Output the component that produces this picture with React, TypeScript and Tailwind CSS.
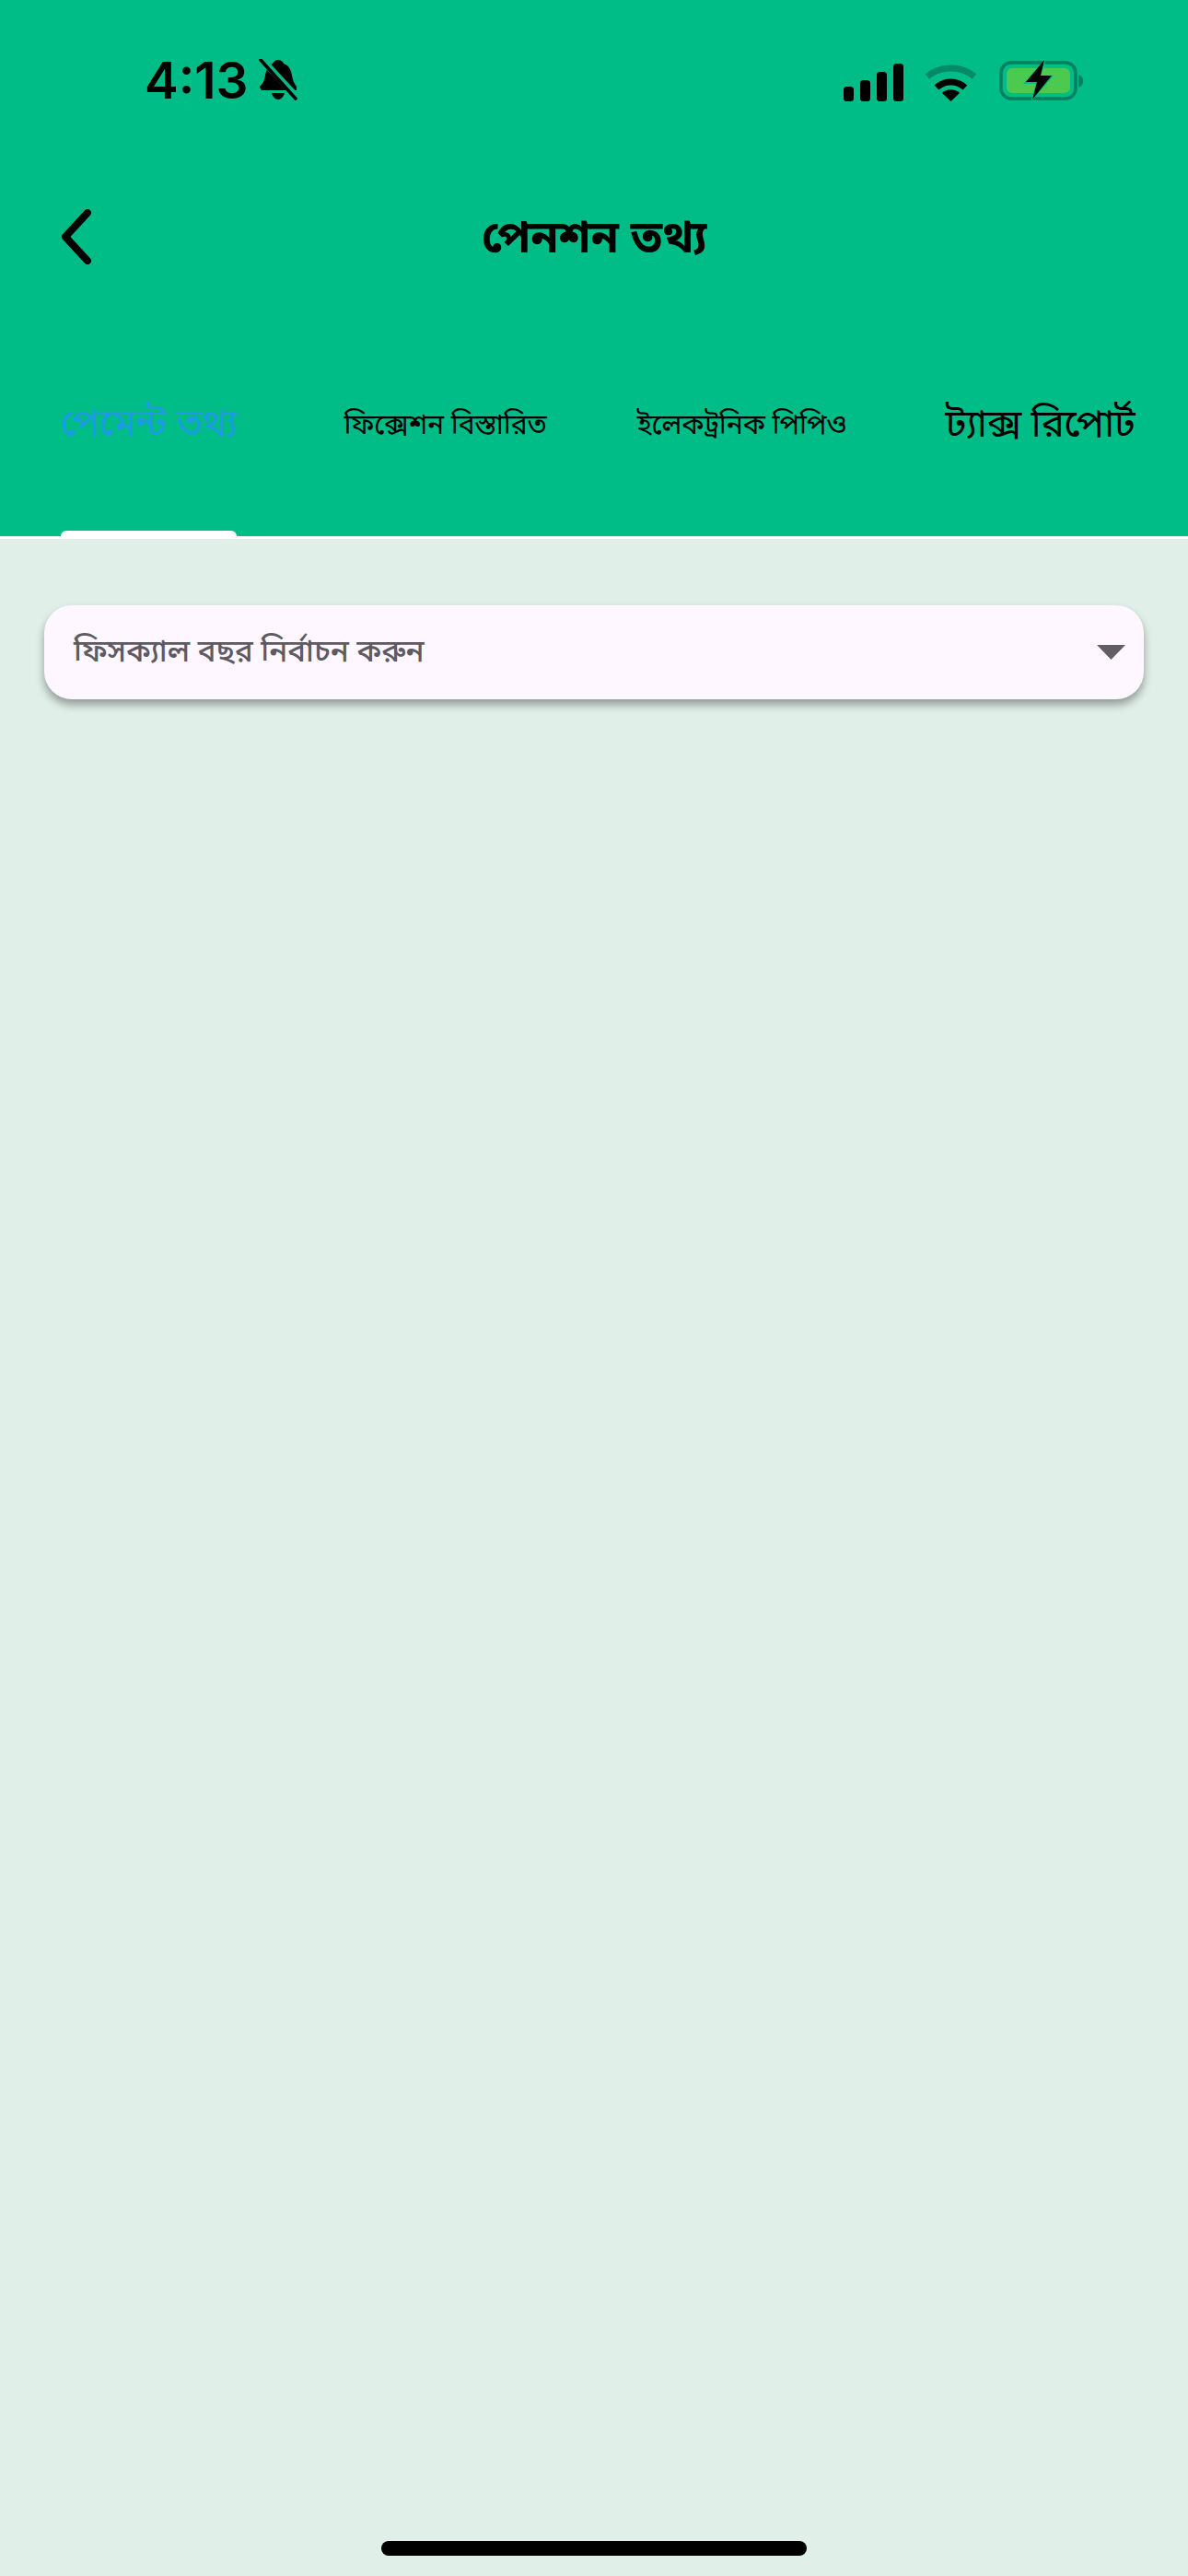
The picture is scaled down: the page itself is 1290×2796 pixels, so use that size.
const bn = { fontFamily: '"Noto Sans Bengali","Lohit Bengali","Noto Sans","Liberation Sans",sans-serif' };

function Bell() {
  return (
    <svg width="42" height="46" viewBox="0 0 42 46" className="ml-[12px]">
      <path d="M21 1c3 0 5 2 6 4 6 2 8 7 9 13 1 5 2 8 5 12v4H3c-1-2-2-3-2-4 3-3 5-6 6-12 1-6 3-11 8-13 1-2 3-4 6-4z" fill="#000" />
      <path d="M14 37h14c-1 4-4 7-7 7s-6-3-7-7z" fill="#000" />
      <path d="M3 0l39 42" stroke="#00BC87" strokeWidth="7" />
      <path d="M2 1l38 42" stroke="#000" strokeWidth="3.6" strokeLinecap="round" />
    </svg>
  );
}

function Signal() {
  return (
    <svg width="65" height="41" viewBox="0 0 65 41">
      <rect x="0" y="25" width="11" height="16" rx="3.5" fill="#000" />
      <rect x="18" y="18" width="11" height="23" rx="3.5" fill="#000" />
      <rect x="36" y="9" width="11" height="32" rx="3.5" fill="#000" />
      <rect x="54" y="0" width="11" height="41" rx="3.5" fill="#000" />
    </svg>
  );
}

function Wifi() {
  return (
    <svg width="57" height="41" viewBox="0 0 57 41" className="ml-[23px]">
      <path d="M3 14C17 2 40 2 54 14" fill="none" stroke="#038a68" strokeWidth="7" strokeLinecap="butt" />
      <path d="M13 26c9-8 22-8 31 0" fill="none" stroke="#000" strokeWidth="7" />
      <path d="M28.500 41L19 32c5-5 14-5 19 0z" fill="#000" />
    </svg>
  );
}

function Battery() {
  return (
    <svg width="92" height="46" viewBox="0 0 92 46" className="ml-[24px]">
      <rect x="2" y="4" width="81" height="39" rx="11" fill="none" stroke="#03805f" strokeWidth="3.500" />
      <rect x="8" y="10" width="69" height="27" rx="6" fill="#4cc94f" />
      <path d="M86 17c3 1 5 3 5 7s-2 6-5 7z" fill="#03805f" />
      <path d="M51-1L26 27h14l-6 20 25-29H45z" fill="#00BC87" />
      <path d="M49 1L29 25h12l-5 19 21-26H45z" fill="#000" />
    </svg>
  );
}

function Tab({ label, width, active, big }: { label: string; width: string; active?: boolean; big?: boolean }) {
  return (
    <div className={`flex flex-col items-center ${width}`}>
      <div
        style={bn}
        className={`flex flex-1 items-center justify-center whitespace-nowrap pb-[32px] ${big ? "text-[42px] tracking-[-0.3px]" : active ? "text-[41px] tracking-[-0.3px]" : "text-[30px] tracking-[-0.1px]"} ${active ? "text-[#1b9be3]" : "text-black"}`}
      >
        {label}
      </div>
      <div className={`h-[6px] w-[191px] rounded-t-[8px] ${active ? "bg-white" : "bg-transparent"}`} />
    </div>
  );
}

export default function App() {
  return (
    <div className="flex h-[2796px] w-[1290px] flex-col bg-[#e0efe7]">
      <header className="flex h-[585px] flex-col border-b-[3px] border-white bg-[#00bc87]">
        <div className="flex h-[110px] items-end justify-between pl-[157px] pr-[113px]">
          <div className="flex items-center">
            <span className="font-['Inter'] text-[55px] font-semibold leading-[46px] text-black">4:13</span>
            <Bell />
          </div>
          <div className="flex items-end">
            <Signal />
            <Wifi />
            <Battery />
          </div>
        </div>
        <div className="relative mt-[112px] flex h-[76px] items-center justify-center">
          <svg width="36" height="60" viewBox="0 0 36 60" className="absolute left-[65px] top-[5px]">
            <path d="M30 4L6 30l24 26" fill="none" stroke="#000" strokeWidth="8" strokeLinecap="round" strokeLinejoin="round" />
          </svg>
          <h1 style={bn} className="pt-[3px] text-[49px] font-bold text-black">পেনশন তথ্য</h1>
        </div>
        <div className="mt-[84px] flex flex-1 pl-[66px]">
          <Tab label="পেমেন্ট তথ্য" width="w-[191px]" active />
          <Tab label="ফিক্সেশন বিস্তারিত" width="w-[225px] ml-[114px]" />
          <Tab label="ইলেকট্রনিক পিপিও" width="w-[227px] ml-[96px]" />
          <Tab label="ট্যাক্স রিপোর্ট" width="w-[207px] ml-[107px]" big />
        </div>
      </header>
      <main className="px-[48px] pt-[72px]">
        <div className="flex h-[102px] items-center justify-between rounded-[30px] bg-[#fef7ff] pl-[32px] pr-[20px] shadow-[0_6px_10px_rgba(0,0,0,0.35)]">
          <span style={bn} className="pt-[4px] text-[33px] font-medium text-[#5d5a61]">ফিসক্যাল বছর নির্বাচন করুন</span>
          <svg width="31" height="16" viewBox="0 0 31 16">
            <path d="M0 0h31L15.500 16z" fill="#625f64" />
          </svg>
        </div>
      </main>
      <div className="mt-auto flex justify-center pb-[22px]">
        <div className="h-[16px] w-[462px] rounded-full bg-black" />
      </div>
    </div>
  );
}
